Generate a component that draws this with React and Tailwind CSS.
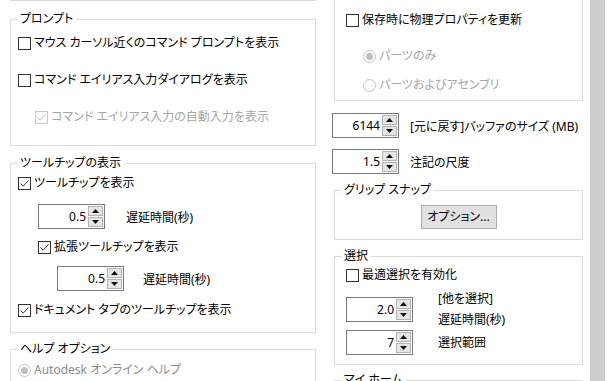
import React from "react";

const Check = ({ checked, disabled }) => (
  <span
    className={`w-[13px] h-[13px] border flex items-center justify-center bg-white shrink-0 ${
      disabled ? "border-[#c8c8c8]" : "border-[#333333]"
    }`}
  >
    {checked && (
      <svg width="11" height="11" viewBox="0 0 11 11">
        <path
          d="M1.5 5.5 L4.2 8.2 L9.5 2.5"
          fill="none"
          stroke={disabled ? "#bcbcbc" : "#333333"}
          strokeWidth="1"
        />
      </svg>
    )}
  </span>
);

const Radio = ({ selected }) => (
  <span className="w-[13px] h-[13px] rounded-full border border-[#c4c4c4] bg-white flex items-center justify-center shrink-0">
    {selected && <span className="w-[7px] h-[7px] rounded-full bg-[#c0c0c0]" />}
  </span>
);

const CheckRow = ({ label, checked, disabled, className = "" }) => (
  <div className={`flex items-center gap-[3px] h-[16px] ${className}`}>
    <Check checked={checked} disabled={disabled} />
    <span className={disabled ? "text-[#a6a6a6]" : "text-black"}>{label}</span>
  </div>
);

const RadioRow = ({ label, selected, className = "", tone = "text-[#a6a6a6]" }) => (
  <div className={`flex items-center gap-[3px] h-[16px] ${className}`}>
    <Radio selected={selected} />
    <span className={tone}>{label}</span>
  </div>
);

const Arrow = ({ up }) => (
  <svg width="7" height="4" viewBox="0 0 7 4">
    <path d={up ? "M0 4 L3.5 0 L7 4 Z" : "M0 0 L3.5 4 L7 0 Z"} fill="#111" />
  </svg>
);

const Spinner = ({ value }) => (
  <div className="flex w-[67px] h-[25px] border border-[#7a7a7a] bg-white shrink-0">
    <div className="flex-1 flex items-center justify-end pr-[2px] text-[12px]">{value}</div>
    <div className="w-[16px] flex flex-col gap-[1px] p-[1px] pl-0">
      <div className="flex-1 bg-[#e5e5e5] border border-[#b4b4b4] flex items-center justify-center">
        <Arrow up />
      </div>
      <div className="flex-1 bg-[#e5e5e5] border border-[#b4b4b4] flex items-center justify-center">
        <Arrow />
      </div>
    </div>
  </div>
);

const Group = ({ title, className = "", children }) => (
  <fieldset className={`border border-[#dcdcdc] ${className}`}>
    <legend className="ml-[6px] px-[3px] leading-[16px]">{title}</legend>
    {children}
  </fieldset>
);

export default function App() {
  return (
    <div className="w-[607px] h-[381px] overflow-hidden bg-white flex text-[12px] leading-[16px] text-black font-['Noto_Sans','Noto_Sans_CJK_JP',sans-serif] [font-feature-settings:'palt']">
      {/* left column */}
      <div className="w-[306px] ml-[10px] shrink-0 flex flex-col">
        <div className="h-[4px] border border-t-0 border-[#dcdcdc]" />

        <Group title="プロンプト" className="mt-[10px] pb-[20px]">
          <CheckRow className="ml-[7px] mt-[8px]" label="マウス カーソル近くのコマンド プロンプトを表示" />
          <CheckRow className="ml-[7px] mt-[21px]" label="コマンド エイリアス入力ダイアログを表示" />
          <CheckRow className="ml-[24px] mt-[21px]" label="コマンド エイリアス入力の自動入力を表示" checked disabled />
        </Group>

        <Group title="ツールチップの表示" className="mt-[9px] pb-[14px]">
          <CheckRow className="ml-[7px] mt-[4px]" label="ツールチップを表示" checked />
          <div className="flex items-center ml-[27px] mt-[13px]">
            <Spinner value="0.5" />
            <span className="ml-[21px] pt-[3px]">遅延時間(秒)</span>
          </div>
          <CheckRow className="ml-[27px] mt-[10px]" label="拡張ツールチップを表示" checked />
          <div className="flex items-center ml-[46px] mt-[11px]">
            <Spinner value="0.5" />
            <span className="ml-[19px] pt-[3px]">遅延時間(秒)</span>
          </div>
          <CheckRow className="ml-[7px] mt-[11px]" label="ドキュメント タブのツールチップを表示" checked />
        </Group>

        <Group title="ヘルプ オプション" className="mt-[8px] pb-[20px]">
          <RadioRow className="ml-[7px] mt-[5px]" label="Autodesk オンライン ヘルプ" selected tone="text-[#8c8c8c]" />
        </Group>
      </div>

      {/* right column */}
      <div className="w-[251px] ml-[16px] shrink-0 overflow-hidden flex flex-col">
        <div className="ml-[2px] w-[249px] border border-t-0 border-[#dcdcdc] pt-[12px] pb-[7px]">
          <CheckRow className="ml-[11px]" label="保存時に物理プロパティを更新" />
          <RadioRow className="ml-[28px] mt-[20px]" label="パーツのみ" selected />
          <RadioRow className="ml-[28px] mt-[13px]" label="パーツおよびアセンブリ" />
        </div>

        <div className="flex items-center mt-[12px]">
          <Spinner value="6144" />
          <span className="ml-[11px] pt-[3px] whitespace-nowrap">[元に戻す]バッファのサイズ (MB)</span>
        </div>
        <div className="flex items-center mt-[11px]">
          <Spinner value="1.5" />
          <span className="ml-[11px] pt-[3px]">注記の尺度</span>
        </div>

        <Group title="グリップ スナップ" className="ml-[2px] w-[249px] mt-[8px] pb-[10px]">
          <div className="flex justify-center mt-[7px]">
            <button className="w-[76px] h-[24px] bg-[#e1e1e1] border border-[#adadad] flex items-center justify-center">
              オプション...
            </button>
          </div>
        </Group>

        <Group title="選択" className="ml-[2px] w-[249px] mt-[8px] pb-[9px]">
          <CheckRow className="ml-[11px] mt-[3px]" label="最適選択を有効化" />
          <div className="flex items-start ml-[11px] mt-[14px]">
            <Spinner value="2.0" />
            <div className="ml-[25px] -mt-[9px] -mb-[8px] flex flex-col leading-[21px]">
              <span>[他を選択]</span>
              <span>遅延時間(秒)</span>
            </div>
          </div>
          <div className="flex items-center ml-[11px] mt-[8px]">
            <Spinner value="7" />
            <span className="ml-[25px] pt-[1px]">選択範囲</span>
          </div>
        </Group>

        <Group title="マイ ホーム" className="ml-[2px] w-[249px] mt-[7px] pb-[10px]">
          <div className="h-[40px]" />
        </Group>
      </div>

      {/* scrollbar */}
      <div className="ml-[7px] w-[15px] h-full bg-[#cdcdcd] shrink-0" />
    </div>
  );
}
